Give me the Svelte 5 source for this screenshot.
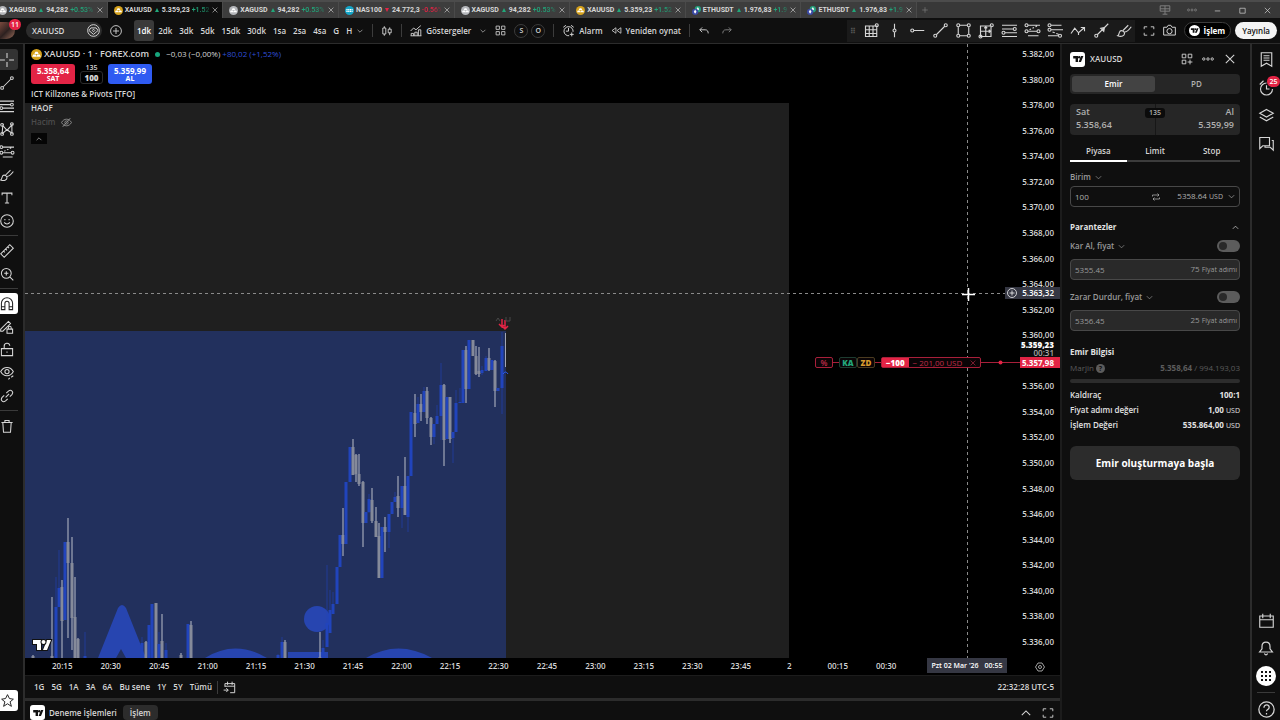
<script lang="ts">
  type Tab = { symbol: string; price: string; change: string; coin: string; down?: boolean; active?: boolean };
  // x, high, low, body top, body bottom, rising
  type Candle = [number, number, number, number, number, boolean];

  const tabs: Tab[] = [
    { symbol: "XAGUSD", price: "94,282", change: "+0.53% /", coin: "silver" },
    { symbol: "XAUUSD", price: "5.359,23", change: "+1.52%", coin: "gold", active: true },
    { symbol: "XAGUSD", price: "94,282", change: "+0.53% /", coin: "silver" },
    { symbol: "NAS100", price: "24.772,3", change: "-0.56%", coin: "nas", down: true },
    { symbol: "XAGUSD", price: "94,282", change: "+0.53% /", coin: "silver" },
    { symbol: "XAUUSD", price: "5.359,23", change: "+1.52%", coin: "gold" },
    { symbol: "ETHUSDT", price: "1.976,83", change: "+1.91%", coin: "eth" },
    { symbol: "ETHUSDT", price: "1.976,83", change: "+1.91%", coin: "eth" },
  ];

  const intervals = ["1dk", "2dk", "3dk", "5dk", "15dk", "30dk", "1sa", "2sa", "4sa", "G", "H"];
  const favorites = ["grid", "vline", "hray", "trend", "rect", "position", "fib", "fibext", "fibtime", "zigzag", "arrow", "brush"];
  const drawTools = ["cross", "trend", "fib", "pattern", "fibext", "brush", "text", "smile", "-", "ruler", "zoom", "-", "magnet", "pencil", "lock", "eye", "link", "-", "trash"];
  // the last slot sits under the cursor label
  const times = ["20:15", "20:30", "20:45", "21:00", "21:15", "21:30", "21:45", "22:00", "22:15", "22:30", "22:45", "23:00", "23:15", "23:30", "23:45", "2", "00:15", "00:30", ""];
  const ranges = ["1G", "5G", "1A", "3A", "6A", "Bu sene", "1Y", "5Y", "Tümü"];
  const prices = Array.from({ length: 24 }, (_, i) => `5.${382 - i * 2},00`);
  const orderTypes = ["Piyasa", "Limit", "Stop"];
  const orderInfo = [
    { label: "Kaldıraç", value: "100:1", unit: "" },
    { label: "Fiyat adımı değeri", value: "1,00", unit: "USD" },
    { label: "İşlem Değeri", value: "535.864,00", unit: "USD" },
  ];

  let interval = $state("1dk");
  let orderType = $state("Piyasa");
  let takeProfit = $state(false);
  let stopLoss = $state(false);

  const candles: Candle[] = [
    [33, 655, 658, 656, 658, false],
    [52, 597, 658, 656, 658, false],
    [56, 577, 658, 607, 658, true],
    [59, 550, 607, 588, 607, true],
    [62, 580, 658, 587, 621, false],
    [65, 542, 620, 542, 620, true],
    [68, 518, 638, 542, 563, false],
    [72, 537, 650, 563, 618, false],
    [75, 577, 658, 617, 658, false],
    [78, 638, 658, 639, 658, false],
    [85, 632, 658, 656, 658, true],
    [142, 637, 658, 643, 658, true],
    [146, 641, 658, 642, 658, false],
    [149, 625, 658, 625, 658, true],
    [152, 604, 658, 604, 658, true],
    [156, 603, 658, 603, 658, false],
    [159, 632, 658, 644, 658, true],
    [162, 614, 658, 641, 658, false],
    [166, 643, 658, 650, 658, true],
    [181, 653, 658, 655, 658, false],
    [188, 624, 658, 624, 658, true],
    [191, 621, 658, 625, 658, false],
    [278, 654, 658, 655, 658, true],
    [282, 637, 658, 642, 658, true],
    [285, 640, 658, 642, 658, false],
    [320, 632, 658, 657, 658, false],
    [323, 640, 658, 648, 658, true],
    [327, 565, 647, 623, 647, true],
    [330, 590, 633, 610, 633, true],
    [333, 592, 614, 604, 614, true],
    [337, 567, 604, 567, 604, true],
    [340, 535, 567, 535, 567, true],
    [343, 508, 556, 535, 544, false],
    [346, 482, 544, 482, 544, true],
    [350, 447, 482, 447, 482, true],
    [353, 439, 475, 447, 475, false],
    [356, 454, 482, 455, 474, false],
    [359, 454, 486, 474, 484, false],
    [363, 481, 547, 482, 523, false],
    [366, 512, 523, 512, 523, true],
    [369, 494, 513, 499, 512, true],
    [372, 488, 523, 500, 521, false],
    [376, 507, 537, 521, 537, false],
    [379, 523, 578, 536, 578, false],
    [382, 527, 578, 527, 578, true],
    [385, 517, 552, 527, 532, false],
    [389, 514, 548, 514, 532, true],
    [392, 502, 514, 502, 514, true],
    [395, 492, 502, 497, 502, true],
    [398, 476, 517, 496, 508, false],
    [402, 486, 528, 486, 508, true],
    [405, 457, 515, 486, 515, false],
    [408, 476, 532, 476, 517, true],
    [411, 412, 476, 412, 476, true],
    [415, 394, 437, 413, 424, false],
    [418, 397, 423, 404, 423, true],
    [421, 394, 421, 404, 412, false],
    [424, 387, 412, 391, 412, true],
    [427, 387, 424, 391, 418, false],
    [431, 417, 445, 418, 437, false],
    [434, 424, 444, 424, 437, true],
    [437, 405, 424, 416, 424, true],
    [441, 363, 440, 385, 416, true],
    [444, 384, 466, 385, 440, false],
    [447, 397, 439, 397, 439, true],
    [450, 397, 443, 397, 439, false],
    [453, 432, 463, 432, 438, true],
    [456, 390, 432, 403, 432, true],
    [460, 388, 403, 402, 403, true],
    [463, 350, 403, 350, 403, true],
    [466, 346, 403, 350, 389, false],
    [469, 340, 389, 340, 389, true],
    [473, 340, 356, 340, 356, false],
    [476, 346, 375, 356, 374, false],
    [479, 347, 377, 371, 374, false],
    [482, 366, 375, 370, 373, true],
    [486, 356, 371, 358, 371, true],
    [489, 348, 371, 358, 370, false],
    [492, 360, 370, 360, 370, true],
    [495, 360, 407, 361, 391, false],
    [498, 388, 391, 388, 391, true],
    [502, 332, 414, 346, 388, true],
  ];

  // stroke paths on a 20 x 20 grid
  const icons: Record<string, string> = {
    close: "M4 4l12 12M16 4L4 16",
    plus: "M10 3v14M3 10h14",
    down: "M4 7l6 6 6-6",
    up: "M4 13l6-6 6 6",
    dots: "M5 10a2 2 0 1 1-4 0 2 2 0 0 1 4 0zM12 10a2 2 0 1 1-4 0 2 2 0 0 1 4 0zM19 10a2 2 0 1 1-4 0 2 2 0 0 1 4 0z",
    min: "M4 11h12",
    max: "M4 5h12v11H4z",
    monitor: "M2 3h16v9H2zM10 3v9M2 8h16M10 12v5M6 17h8",
    gem: "M19 10a9 9 0 1 1-18 0 9 9 0 0 1 18 0zM6 6h8l3 4-7 6-7-6zM10 8l2 2-2 2-2-2z",
    addcircle: "M19 10a9 9 0 1 1-18 0 9 9 0 0 1 18 0zM10 5v10M5 10h10",
    candles: "M3 5h5v10H3zM5.500 2v3M5.500 15v3M12 7h5v6h-5zM14.500 4v3M14.500 13v4",
    indicators: "M1 10l5-5 4 3 8-7M2 18v-4h4v4M8 18v-6h4v6M14 18V8h4v10M1 18h18",
    layouts: "M2 2h6v6H2zM12 2h6v6h-6zM2 12h6v6H2zM12 12h6v6h-6z",
    addlayout: "M2 2h6v6H2zM12 2h6v6h-6zM2 12h6v6H2zM15 11v8M11 15h8",
    alarm: "M11 18a7 7 0 1 1 6-6M10 6v5H6M2 5l4-3M14 2l4 3M15 13v6M12 16h6",
    replay: "M9 5v10l-7-5zM18 5v10l-7-5z",
    undo: "M7 4L3 8l4 4M3 8h9c4 0 5 3 5 6",
    redo: "M13 4l4 4-4 4M17 8H8c-4 0-5 3-5 6",
    grid: "M2 4h15v14H2zM7 4v14M12 4v14M2 9h15M2 14h15M19 3a2 2 0 1 1-4 0 2 2 0 0 1 4 0z",
    vline: "M10 1v7M10 12v7M12 10a2 2 0 1 1-4 0 2 2 0 0 1 4 0z",
    hray: "M5 10h14M5 10a2 2 0 1 1-4 0 2 2 0 0 1 4 0z",
    trend: "M5 15L15 5M5 17a2 2 0 1 1-4 0 2 2 0 0 1 4 0zM19 3a2 2 0 1 1-4 0 2 2 0 0 1 4 0z",
    rect: "M5 3h10M5 17h10M3 5v10M17 5v10M5 3a2 2 0 1 1-4 0 2 2 0 0 1 4 0zM19 3a2 2 0 1 1-4 0 2 2 0 0 1 4 0zM5 17a2 2 0 1 1-4 0 2 2 0 0 1 4 0zM19 17a2 2 0 1 1-4 0 2 2 0 0 1 4 0z",
    position: "M2 4h14v14H2zM2 11h14M9 4v14M19 3a2 2 0 1 1-4 0 2 2 0 0 1 4 0zM4 18a2 2 0 1 1-4 0 2 2 0 0 1 4 0zM7 7l2-2 2 2M13 9l2 2-2 2",
    fib: "M0 3h20M0 8h15M4 13h16M0 18h20M19 8a2 2 0 1 1-4 0 2 2 0 0 1 4 0zM4 13a2 2 0 1 1-4 0 2 2 0 0 1 4 0z",
    fibext: "M4 3h16M4 11h12M4 17h14M6 9l2-1M10 7l2-1M14 5l2-1M4 3a2 2 0 1 1-4 0 2 2 0 0 1 4 0zM4 11a2 2 0 1 1-4 0 2 2 0 0 1 4 0zM20 11a2 2 0 1 1-4 0 2 2 0 0 1 4 0z",
    fibtime: "M4 3h14M4 9h16M0 17h14M6 12l3 1M11 14l3 1M4 3a2 2 0 1 1-4 0 2 2 0 0 1 4 0zM4 9a2 2 0 1 1-4 0 2 2 0 0 1 4 0zM18 17a2 2 0 1 1-4 0 2 2 0 0 1 4 0z",
    zigzag: "M0 14l5-7 5 6 8-7M13 6h5v5M10 13v3",
    arrow: "M4 16L19 1M9 7l5-1-1 5zM10 8l3 1M5 17a2 2 0 1 1-4 0 2 2 0 0 1 4 0z",
    brush: "M1 17c2-1 1-3 3-6 2-2 6 0 6 3 0 3-4 5-9 3zM8 10l7-7M10 12c4 0 6-3 9-7",
    full: "M2 7V3h5M13 3h5v4M18 13v4h-5M7 17H2v-4",
    camera: "M1 5h5l2-3h4l2 3h5v12H1zM14 11a4 4 0 1 1-8 0 4 4 0 0 1 8 0z",
    cross: "M10 0v7M10 13v7M0 10h7M13 10h7",
    pattern: "M3 17L4 5l6 7 7-8v12l-7-5-7 6M5 4a2 2 0 1 1-4 0 2 2 0 0 1 4 0zM19 3a2 2 0 1 1-4 0 2 2 0 0 1 4 0zM5 17a2 2 0 1 1-4 0 2 2 0 0 1 4 0zM19 17a2 2 0 1 1-4 0 2 2 0 0 1 4 0z",
    text: "M3 6V3h14v3M10 3v14M7 17h6",
    smile: "M19 10a9 9 0 1 1-18 0 9 9 0 0 1 18 0zM7 7v2M13 7v2M6 12c2 3 6 3 8 0",
    ruler: "M1 14L14 1l5 5L6 19zM5 10l2 2M8 7l2 2M11 4l2 2",
    zoom: "M16 9a7 7 0 1 1-14 0 7 7 0 0 1 14 0zM14 14l5 5M9 6v6M6 9h6",
    magnet: "M2 18V9a8 8 0 0 1 16 0v9h-5V9a3 3 0 0 0-6 0v9zM2 14h5M13 14h5",
    pencil: "M1 13L12 2l3 3L4 16H1zM10 13h8v6h-8zM12 13v-2a2 2 0 0 1 4 0v2",
    lock: "M2 8h16v10H2zM6 8V5a4 4 0 0 1 8-1M10 12v2",
    eye: "M1 8c4-8 14-8 18 0-4 8-14 8-18 0zM13 8a3 3 0 1 1-6 0 3 3 0 0 1 6 0zM12 19l2-2M16 16l3-2",
    link: "M8 12L13 7M9 6l3-3c4-3 8 1 5 5l-3 3M11 14l-3 3c-4 3-8-1-5-5l3-3",
    trash: "M2 5h16M4 5l1 14h10l1-14M7 5V2h6v3",
    star: "M10 1l3 6 6 1-5 4 2 7-6-4-6 4 2-7-5-4 6-1z",
    hidden: "M1 10c4-8 14-8 18 0-4 8-14 8-18 0zM13 10a3 3 0 1 1-6 0 3 3 0 0 1 6 0zM3 18L17 2",
    hexnut: "M6 2h8l5 8-5 8H6l-5-8zM13 10a3 3 0 1 1-6 0 3 3 0 0 1 6 0z",
    calgo: "M3 9V4h15v14h-7M7 1v5M14 1v5M3 8h15M1 14h7M5 11l3 3-3 3",
    swap: "M3 9V6h13M13 3l3 3-3 3M17 11v3H4M7 11l-3 3 3 3",
    list: "M3 1h14v18l-7-4-7 4zM6 5h8M6 8h8M6 11h8",
    clock: "M18 12a8 8 0 1 1-8-8M10 7v5h4M1 6l5-5",
    layers: "M10 2l9 5-9 5-9-5zM1 12l9 5 9-5",
    chat: "M1 2h13v11H5l-4 4zM17 6h2v13l-4-4H8v-2",
    calendar: "M1 4h18v15H1zM1 9h18M5 1v6M15 1v6",
    bell: "M2 15h16l-3-4V8c0-7-10-7-10 0v3zM8 17c1 2 3 2 4 0",
    help: "M19 10a9 9 0 1 1-18 0 9 9 0 0 1 18 0zM7 8c0-5 7-4 6 0 0 2-3 2-3 4M10 14v2",
  };
</script>

{#snippet icon(name: string, size: number)}
  <svg class="icon" width={size} height={size} viewBox="0 0 20 20" aria-hidden="true">
    <path d={icons[name]} />
  </svg>
{/snippet}

{#snippet logo(size: number)}
  <svg class="logo" width={size} height={size} viewBox="0 0 20 20" aria-hidden="true">
    <path d="M2 5h8v10H6V9H2zM15 5h4l-4 10h-4z" />
    <circle cx="12" cy="7" r="2" />
  </svg>
{/snippet}

{#snippet coin(kind: string, size: number)}
  <svg class="coin" width={size} height={size} viewBox="0 0 20 20" aria-hidden="true">
    {#if kind === "eth"}
      <circle cx="13" cy="7" r="7" fill="#25a17c" />
      <path d="M13 2l3 5-3 3-3-3z" fill="#fff" />
      <circle cx="7" cy="13" r="7" fill="#3b4aa5" />
      <path d="M7 8l3 5-3 4-3-4z" fill="#fff" />
    {:else if kind === "nas"}
      <circle cx="10" cy="10" r="10" fill="#13a5c8" />
      <path d="M3 8h14M3 12h14" stroke="#fff" stroke-width="3" stroke-dasharray="3 1" />
    {:else}
      <circle cx="10" cy="10" r="10" fill={kind === "gold" ? "#d6a21c" : "#b4b6ba"} />
      <path d="M8 5h4l2 4H6zM4 10h5l1 4H2zM11 10h5l2 4h-8z" fill="#fff" />
    {/if}
  </svg>
{/snippet}

<div class="app">
  <header class="tabbar">
    <nav class="tabs">
      {#each tabs as tab}
        <div class="tab" class:active={tab.active}>
          {@render coin(tab.coin, 9)}
          <a href="#chart">{tab.symbol}</a>
          <span class="mark" class:down={tab.down}></span>
          <span>{tab.price}</span>
          <span class="change" class:down={tab.down}>{tab.change}</span>
          <button aria-label="Kapat">{@render icon("close", 8)}</button>
        </div>
      {/each}
    </nav>
    <button class="dim" aria-label="Yeni sekme">{@render icon("plus", 8)}</button>
    <div class="window">
      <button class="dim" aria-label="Ekranlar">{@render icon("monitor", 12)}</button>
      <button class="dim" aria-label="Menü">{@render icon("dots", 10)}</button>
      <button aria-label="Küçült">{@render icon("min", 9)}</button>
      <button aria-label="Büyüt">{@render icon("max", 9)}</button>
      <button aria-label="Pencereyi kapat">{@render icon("close", 9)}</button>
    </div>
  </header>

  <div class="toolbar">
    <button class="avatar" aria-label="Profil"><span class="badge">11</span></button>
    <button class="search"><span>XAUUSD</span>{@render icon("gem", 13)}</button>
    <button class="add" aria-label="Sembol ekle">{@render icon("addcircle", 12)}</button>
    <div class="intervals">
      {#each intervals as item}
        <button class:on={interval === item} onclick={() => (interval = item)}>{item}</button>
      {/each}
      <button class="more" aria-label="Diğer">{@render icon("down", 8)}</button>
    </div>
    <span class="bar"></span>
    <button aria-label="Mum">{@render icon("candles", 12)}</button>
    <span class="bar"></span>
    <button>{@render icon("indicators", 12)}Göstergeler</button>
    <button aria-label="Şablonlar">{@render icon("down", 8)}</button>
    <button aria-label="Düzen">{@render icon("layouts", 11)}</button>
    <div class="rounds">
      <button class="round">S</button>
      <button class="round">O</button>
    </div>
    <span class="bar"></span>
    <button>{@render icon("alarm", 13)}Alarm</button>
    <button class="replay">{@render icon("replay", 11)}Yeniden oynat</button>
    <span class="bar"></span>
    <button class="undo" aria-label="Geri al">{@render icon("undo", 12)}</button>
    <button class="dim" aria-label="Yinele">{@render icon("redo", 12)}</button>
    <div class="favorites">
      <span class="grip">⠿</span>
      {#each favorites as tool}
        <button aria-label={tool}>{@render icon(tool, 15)}</button>
      {/each}
    </div>
    <button aria-label="Tam ekran">{@render icon("full", 12)}</button>
    <button class="shot" aria-label="Görüntü al">{@render icon("camera", 13)}</button>
    <button class="trade"><i>{@render logo(9)}</i>İşlem</button>
    <button class="publish">Yayınla</button>
  </div>

  <div class="workspace">
    <aside class="drawbar">
      {#each drawTools as tool}
        {#if tool === "-"}
          <hr />
        {:else}
          <button class={tool} aria-label={tool}>{@render icon(tool, 14)}</button>
        {/if}
      {/each}
      <button class="star" aria-label="Favoriler">{@render icon("star", 13)}</button>
    </aside>

    <main>
      <section class="chart" id="chart">
        <svg class="plot" aria-hidden="true">
          <g transform="translate(-25 -44)">
            <rect x="25" y="103" width="764" height="555" fill="#1f1f1f" />
            <rect x="25" y="331" width="481" height="327" fill="#22305d" />
            <path class="mark-text" d="M98 658l20-50q4-6 8 0l20 50h-20l-5-9-5 9zM205 658q30-19 62 0zM288 652h40v6h-40zM366 658q32-19 66 0z" />
            <circle class="mark-text" cx="317" cy="619" r="13" />
            {#each candles as [x, high, low, top, bottom, rising]}
              <g class:rising class="candle">
                <rect class="wick" x={x - 0.5} y={high} width="1" height={low - high} />
                <rect x={x - 1.5} y={top} width="3" height={bottom - top} />
              </g>
            {/each}
            <path d="M505.500 333v34" stroke="#a3a7b4" />
            <path d="M503 374q2.500-4 5 0" stroke="#2c5cf0" fill="none" />
            <path d="M502 319v8M505 320v9M499 324l3 3 2-2M502 326l3 3 3-3" stroke="#e32445" stroke-width="1.500" fill="none" />
            <path d="M496 321l2-3 2 3M506 317v4h4v-4" stroke="#484848" fill="none" />
            <path class="cross-line" d="M25 293.500H1007M967.500 44V658" />
            <path d="M962 294.500h13M968.500 288v13" stroke="#fff" stroke-width="1.500" />
            <path d="M815 362.500H1020" stroke="#a81f3a" />
            <circle cx="1000.500" cy="362.500" r="2" fill="#e32445" />
            <g class="brand" transform="translate(32 635)">
              <path d="M1 5h8v10H5V9H1zM15 5h4l-4 10h-4z" />
              <circle cx="11.500" cy="7" r="2" />
            </g>
          </g>
        </svg>

        <div class="legend">
          <div class="legend-title">
            {@render coin("gold", 11)}
            <h1>XAUUSD · 1 · FOREX.com</h1>
            <span class="live"></span>
            <span class="delta">−0,03 (−0,00%)</span>
            <span class="gain">+80,02 (+1,52%)</span>
          </div>
          <div class="quotes">
            <button class="sell">5.358,64<small>SAT</small></button>
            <div class="lots"><span>135</span><b>100</b></div>
            <button class="buy">5.359,99<small>AL</small></button>
          </div>
          <div class="study">ICT Killzones &amp; Pivots [TFO]</div>
          <div class="study">HAOF</div>
          <div class="study muted">Hacim {@render icon("hidden", 11)}</div>
          <button class="fold" aria-label="Daralt">{@render icon("up", 8)}</button>
        </div>

        <div class="order">
          <span class="chip red">%</span>
          <span class="pair"><b class="chip green">KA</b><b class="chip amber">ZD</b></span>
          <span class="lot"><b>−100</b><span>− 201,00 USD</span><button aria-label="İptal">{@render icon("close", 8)}</button></span>
        </div>

        <div class="prices">
          {#each prices as price}<span>{price}</span>{/each}
          <div class="cursor-price"><i>{@render icon("addcircle", 10)}</i>5.363,32</div>
          <div class="last-price"><b>5.359,23</b><span>00:31</span></div>
          <div class="entry-price">5.357,98</div>
        </div>
      </section>

      <div class="time-axis">
        <div class="times">
          {#each times as time}<span>{time}</span>{/each}
        </div>
        <div class="cursor-time"><span>Pzt 02 Mar '26</span><span>00:55</span></div>
        <button aria-label="Ayarlar">{@render icon("hexnut", 10)}</button>
      </div>

      <div class="ranges">
        {#each ranges as range}<button>{range}</button>{/each}
        <span class="bar"></span>
        <button aria-label="Tarihe git">{@render icon("calgo", 13)}</button>
        <button class="clock">22:32:28 UTC-5</button>
      </div>

      <div class="dock">
        <span class="tile">{@render logo(12)}</span>
        <button>Deneme İşlemleri</button>
        <button class="on">İşlem</button>
        <div class="dock-end">
          <button aria-label="Aç">{@render icon("up", 14)}</button>
          <button aria-label="Büyüt">{@render icon("full", 12)}</button>
        </div>
      </div>
    </main>

    <form class="ticket">
      <header>
        <span class="tile">{@render logo(12)}</span>
        <h2>XAUUSD</h2>
        <button type="button" aria-label="Düzen ekle">{@render icon("addlayout", 12)}</button>
        <button type="button" aria-label="Diğer">{@render icon("dots", 12)}</button>
        <button type="button" aria-label="Kapat">{@render icon("close", 14)}</button>
      </header>

      <div class="segment">
        <button type="button" class="on">Emir</button>
        <button type="button">PD</button>
      </div>

      <div class="sides">
        <button type="button"><span>Sat</span><span>5.358,64</span></button>
        <button type="button"><span>Al</span><span>5.359,99</span></button>
        <span class="spread">135</span>
      </div>

      <div class="types">
        {#each orderTypes as type}
          <button type="button" class:on={orderType === type} onclick={() => (orderType = type)}>{type}</button>
        {/each}
      </div>

      <label class="caption" for="units">Birim {@render icon("down", 9)}</label>
      <div class="field">
        <input id="units" value="100" />
        {@render icon("swap", 10)}
        <span class="amount">5358.64 <small>USD</small></span>
        {@render icon("down", 9)}
      </div>

      <h3 class="brackets">Parantezler {@render icon("up", 9)}</h3>

      <div class="toggle-row">
        <label class="caption" for="tp">Kar Al, fiyat {@render icon("down", 9)}</label>
        <input id="tp" type="checkbox" bind:checked={takeProfit} />
      </div>
      <div class="field filled">
        <input aria-label="Kar Al" value="5355.45" />
        <span class="amount">75 <small>Fiyat adımı</small></span>
      </div>

      <div class="toggle-row second">
        <label class="caption" for="sl">Zarar Durdur, fiyat {@render icon("down", 9)}</label>
        <input id="sl" type="checkbox" bind:checked={stopLoss} />
      </div>
      <div class="field filled">
        <input aria-label="Zarar Durdur" value="5356.45" />
        <span class="amount">25 <small>Fiyat adımı</small></span>
      </div>

      <h3 class="info">Emir Bilgisi</h3>
      <div class="margin-row"><span>Marjin <i>?</i></span><span><b>5.358,64</b> / 994.193,03</span></div>
      <div class="meter"></div>
      <dl>
        {#each orderInfo as row}
          <div><dt>{row.label}</dt><dd>{row.value} <small>{row.unit}</small></dd></div>
        {/each}
      </dl>
      <button type="button" class="submit">Emir oluşturmaya başla</button>
    </form>

    <aside class="rail">
      <button aria-label="İzleme listesi">{@render icon("list", 15)}</button>
      <button aria-label="Alarmlar">{@render icon("clock", 15)}<span class="badge">25</span></button>
      <button aria-label="Katmanlar">{@render icon("layers", 15)}</button>
      <button aria-label="Sohbet">{@render icon("chat", 15)}</button>
      <button class="push" aria-label="Takvim">{@render icon("calendar", 15)}</button>
      <button aria-label="Bildirimler">{@render icon("bell", 16)}</button>
      <button aria-label="Ürünler">
        <svg width="20" height="20" viewBox="0 0 20 20" aria-hidden="true">
          <circle cx="10" cy="10" r="10" fill="#fff" />
          <path d="M5 6h10M5 10h10M5 14h10" stroke="#111" stroke-width="2" stroke-dasharray="2 2" />
        </svg>
      </button>
      <hr />
      <button class="last" aria-label="Yardım">{@render icon("help", 17)}</button>
    </aside>
  </div>
</div>

<style>
  :global(body) {
    background: #0f0f0f;
  }

  .app {
    --line: #2c2c2c;
    --red: #e32445;
    --green: #22a67a;
    display: flex;
    flex-direction: column;
    height: 100vh;
    overflow: hidden;
    background: #0f0f0f;
    color: #d6d6d6;
    font: 600 8px/14px "Open Sans", "Noto Sans", sans-serif;
    white-space: nowrap;
  }

  .app *,
  .app *::before {
    box-sizing: border-box;
  }

  button {
    display: flex;
    align-items: center;
    justify-content: center;
    gap: 4px;
    flex: none;
    padding: 0;
    border: 0;
    background: none;
    color: inherit;
    font: inherit;
    cursor: pointer;
  }

  h1,
  h2,
  h3,
  dl,
  dd {
    margin: 0;
    font-size: 8px;
  }

  small {
    font-size: 7px;
  }

  i {
    font-style: normal;
  }

  .icon {
    display: block;
    flex: none;
    fill: none;
    stroke: currentColor;
    stroke-width: 1.5;
    overflow: visible;
  }

  .logo,
  .coin {
    display: block;
    flex: none;
  }

  .logo {
    fill: #111;
  }

  .dim {
    color: #858585;
  }

  .tabbar {
    display: flex;
    align-items: center;
    flex: none;
    height: 18px;
    overflow: hidden;
    border-top: 2px solid #4c4c4c;
    background: #383838;
    font-family: Roboto, "Open Sans", sans-serif;
    font-size: 7px;
    font-weight: 700;
  }

  .tabs {
    display: flex;
    width: 925px;
    height: 100%;
    margin-left: -8px;
    margin-right: 4px;
  }

  .tab {
    display: flex;
    align-items: center;
    flex: 1;
    gap: 2px;
    min-width: 0;
    padding: 0 3px 0 6px;
    border-right: 1px solid #4a4a4a;
    background: #3d3d3d;
  }

  .tab.active {
    background: #0f0f0f;
  }

  .tab a {
    color: inherit;
    text-decoration: none;
  }

  .tab button {
    margin-left: auto;
  }

  .mark {
    flex: none;
    margin: 0 1px;
    border: 2px solid transparent;
    border-top: 0;
    border-bottom: 4px solid var(--green);
  }

  .mark.down {
    border-top: 4px solid var(--red);
    border-bottom: 0;
  }

  .change {
    overflow: hidden;
    min-width: 0;
    color: var(--green);
    font-weight: 500;
    mask-image: linear-gradient(to right, #000 60%, #0004);
  }

  .change.down {
    color: var(--red);
  }

  .window {
    display: flex;
    gap: 16px;
    margin-left: auto;
    padding-right: 8px;
  }

  .toolbar {
    display: flex;
    align-items: center;
    flex: none;
    gap: 8px;
    height: 26px;
    padding-right: 3px;
    border-bottom: 1px solid var(--line);
  }

  .avatar {
    position: relative;
    width: 15px;
    height: 17px;
    border-radius: 0 9px 9px 0;
    background: linear-gradient(135deg, #7b4a3e, #2d2120 50%, #9a6c5a);
  }

  .badge {
    position: absolute;
    top: -3px;
    right: -6px;
    padding: 0 2px;
    border-radius: 6px;
    background: var(--red);
    color: #fff;
    font-size: 7px;
    line-height: 11px;
  }

  .search {
    justify-content: space-between;
    width: 76px;
    height: 17px;
    margin-left: 3px;
    padding: 0 2px 0 6px;
    border-radius: 9px;
    background: #2c2c2c;
  }

  .intervals {
    display: flex;
    gap: 1px;
    margin-left: 4px;
  }

  .intervals button {
    height: 21px;
    padding: 0 3px;
    border-radius: 3px;
  }

  .intervals .on {
    background: #3a3a3a;
    color: #fff;
  }

  .intervals .more {
    padding: 0;
  }

  .bar {
    width: 1px;
    height: 13px;
    background: #3c3c3c;
  }

  .rounds {
    display: flex;
    gap: 3px;
  }

  .round {
    width: 14px;
    height: 14px;
    border: 1px solid #3c3c3c;
    border-radius: 50%;
    font-size: 7px;
  }

  .undo {
    margin-right: 3px;
  }

  .favorites {
    display: flex;
    align-items: center;
    gap: 8px;
    height: 22px;
    margin-left: auto;
    padding: 0 3px;
    background: #1a1a1a;
  }

  .grip {
    color: #555;
  }

  .trade {
    height: 17px;
    padding: 0 5px 0 4px;
    border: 1px solid #3c3c3c;
    border-radius: 9px;
    background: #000;
    color: #fff;
    font-weight: 700;
  }

  .trade i {
    padding: 1px;
    border-radius: 50%;
    background: #fff;
  }

  .publish {
    height: 17px;
    margin-left: -4px;
    padding: 0 7px;
    border-radius: 9px;
    background: #f4f4f4;
    color: #111;
  }

  .workspace {
    display: grid;
    grid-template-columns: 25px minmax(0, 1fr) 192px 28px;
    flex: 1;
    min-height: 0;
  }

  .drawbar {
    display: flex;
    flex-direction: column;
    gap: 2px;
    padding: 5px 7px 9px 0;
    border-right: 2px solid var(--line);
  }

  .drawbar button {
    width: 18px;
    height: 21px;
    padding-right: 4px;
    border-radius: 0 3px 3px 0;
  }

  .drawbar .cross {
    background: #333;
  }

  .drawbar .magnet,
  .drawbar .star {
    background: #fff;
    color: #222;
  }

  .drawbar .star {
    margin-top: auto;
  }

  hr {
    width: 18px;
    height: 1px;
    margin: 2px 0;
    border: 0;
    background: #3a3a3a;
  }

  main {
    display: flex;
    flex-direction: column;
    min-width: 0;
    min-height: 0;
  }

  .chart {
    position: relative;
    display: flex;
    justify-content: space-between;
    flex: 1;
    min-height: 0;
    overflow: hidden;
    background: #000;
  }

  .plot {
    position: absolute;
    inset: 0;
    width: 100%;
    height: 100%;
  }

  .mark-text {
    fill: #2745b0;
  }

  .candle {
    fill: #858a9a;
  }

  .candle .wick {
    fill: #b9bdca;
  }

  .candle.rising,
  .candle.rising .wick {
    fill: #2144bc;
  }

  .candle.rising .wick {
    opacity: 0.6;
  }

  .cross-line {
    stroke: #8a8a8a;
    stroke-dasharray: 3 3;
  }

  .brand {
    fill: #fff;
    stroke: #111;
    stroke-width: 2;
    paint-order: stroke;
  }

  .legend {
    position: relative;
    padding: 3px 6px;
  }

  .legend-title {
    display: flex;
    align-items: center;
    gap: 2px;
  }

  .live {
    width: 5px;
    height: 5px;
    margin: 0 4px;
    border-radius: 50%;
    background: #17a57d;
  }

  .legend h1 {
    font-size: 9px;
    font-weight: 600;
  }

  .delta,
  .gain {
    font-weight: 400;
  }

  .gain {
    color: #2f4fd6;
  }

  .quotes {
    display: flex;
    gap: 5px;
    margin: 3px 0;
  }

  .quotes button {
    flex-direction: column;
    gap: 0;
    width: 44px;
    height: 20px;
    border-radius: 3px;
    color: #fff;
    font-weight: 700;
    line-height: 9px;
  }

  .quotes small {
    line-height: 7px;
  }

  .sell {
    background: var(--red);
  }

  .buy {
    background: #2f5bf2;
  }

  .lots {
    display: flex;
    flex-direction: column;
    align-items: center;
    width: 23px;
    font-size: 7px;
    line-height: 7px;
  }

  .lots b {
    width: 100%;
    border: 1px solid #2c2c2c;
    border-radius: 3px;
    font-size: 8px;
    line-height: 11px;
    text-align: center;
  }

  .study {
    display: flex;
    align-items: center;
    gap: 5px;
  }

  .muted {
    color: #4c4c4c;
  }

  .muted .icon {
    color: #999;
  }

  .fold {
    width: 16px;
    height: 11px;
    margin-top: 4px;
    background: #050505;
  }

  .order {
    position: absolute;
    top: 313px;
    left: 790px;
    display: flex;
    gap: 6px;
    line-height: 9px;
  }

  .chip,
  .lot {
    border: 1px solid #a81f3a;
    border-radius: 2px;
    background: #0a0406;
    color: #c02c48;
  }

  .chip {
    width: 18px;
    text-align: center;
  }

  .pair {
    display: flex;
  }

  .green {
    border-color: #1d3c30;
    color: var(--green);
  }

  .amber {
    border-color: #4b3b20;
    color: #d99a2e;
  }

  .lot {
    display: flex;
  }

  .lot b {
    padding: 0 4px;
    background: var(--red);
    color: #fff;
  }

  .lot span {
    padding: 0 4px;
    font-weight: 400;
  }

  .lot button {
    width: 14px;
  }

  .prices {
    position: relative;
    display: flex;
    flex-direction: column;
    justify-content: space-between;
    width: 53px;
    padding: 3px 6px 9px;
    text-align: right;
  }

  .cursor-price,
  .last-price,
  .entry-price {
    position: absolute;
    right: 0;
    padding-right: 6px;
    color: #fff;
    line-height: 12px;
  }

  .cursor-price {
    top: 243px;
    display: flex;
    align-items: center;
    gap: 5px;
    padding-left: 2px;
    background: #353743;
  }

  .last-price {
    top: 296px;
    display: flex;
    flex-direction: column;
    width: 40px;
    background: #0c0c0c;
    line-height: 9px;
  }

  .last-price span {
    color: #aaa;
    line-height: 8px;
  }

  .entry-price {
    top: 313px;
    width: 40px;
    background: var(--red);
    font-weight: 700;
    line-height: 11px;
  }

  .time-axis {
    position: relative;
    display: flex;
    flex: none;
    height: 17px;
    padding: 0 15px 0 13px;
    background: #000;
  }

  .times {
    display: flex;
    flex: 1;
    margin-right: 76px;
  }

  .times span {
    flex: 1;
    line-height: 16px;
    text-align: center;
  }

  .cursor-time {
    position: absolute;
    top: 0;
    left: 902px;
    display: flex;
    justify-content: center;
    gap: 6px;
    width: 80px;
    height: 15px;
    background: #353743;
    color: #fff;
    font-size: 7px;
    line-height: 16px;
  }

  .ranges {
    display: flex;
    align-items: center;
    flex: none;
    gap: 7px;
    height: 23px;
    padding: 0 6px 0 9px;
    border-top: 1px solid #1c1c1c;
  }

  .ranges .bar {
    margin: 0 -2px;
  }

  .clock {
    margin-left: auto;
  }

  .dock {
    display: flex;
    align-items: center;
    flex: none;
    gap: 4px;
    height: 22px;
    padding: 4px 6px 0 5px;
    border-top: 3px solid var(--line);
  }

  .dock .on {
    height: 15px;
    margin-left: 2px;
    padding: 0 7px;
    border-radius: 4px;
    background: #2c2c2c;
  }

  .dock-end {
    display: flex;
    gap: 9px;
    margin-left: auto;
  }

  .tile {
    display: grid;
    place-items: center;
    width: 15px;
    height: 15px;
    border-radius: 3px;
    background: #fff;
  }

  .ticket {
    padding: 0 10px 0 8px;
    border-left: 2px solid #1c1c1c;
    border-right: 2px solid var(--line);
    color: #b0b0b0;
  }

  .ticket header {
    display: flex;
    align-items: center;
    gap: 9px;
    height: 30px;
    padding-right: 3px;
    color: #d6d6d6;
  }

  .ticket h2 {
    flex: 1;
    margin-left: -4px;
    font-weight: 600;
  }

  .segment,
  .sides,
  .types {
    display: flex;
  }

  .segment {
    height: 20px;
    padding: 2px;
    border-radius: 4px;
    background: #262626;
  }

  .segment button,
  .sides button,
  .types button {
    flex: 1;
  }

  .segment button {
    border-radius: 3px;
  }

  .segment .on {
    background: #434343;
    color: #fff;
  }

  .sides {
    position: relative;
    height: 31px;
    margin: 10px 0 7px;
    border-radius: 4px;
    background: #262626;
  }

  .sides button {
    flex-direction: column;
    align-items: flex-start;
    gap: 0;
    padding: 0 6px 3px;
    font-size: 9px;
    line-height: 13px;
  }

  .sides button + button {
    align-items: flex-end;
    border-left: 1px solid #171717;
  }

  .spread {
    position: absolute;
    top: 4px;
    left: 50%;
    padding: 0 4px;
    border-radius: 3px;
    background: #0b0b0b;
    font-size: 7px;
    line-height: 10px;
    transform: translateX(-50%);
  }

  .types button {
    height: 20px;
    border-bottom: 2px solid #3c3c3c;
    color: #d6d6d6;
  }

  .types .on {
    border-color: #fff;
  }

  .caption,
  h3 {
    display: flex;
    align-items: center;
    gap: 3px;
    height: 14px;
  }

  .caption {
    color: #999;
  }

  .types + .caption {
    margin: 8px 0 2px;
  }

  .field {
    display: flex;
    align-items: center;
    gap: 4px;
    height: 21px;
    padding: 0 3px 0 4px;
    border: 1px solid #484848;
    border-radius: 4px;
    font-weight: 400;
  }

  .filled {
    padding-right: 2px;
    background: #292929;
    color: #999;
  }

  .field input {
    flex: 1;
    width: 0;
    min-width: 0;
    padding: 0;
    border: 0;
    background: none;
    color: inherit;
    font: inherit;
  }

  .field .icon + .amount {
    margin-left: 12px;
  }

  .ticket h3 {
    color: #e2e2e2;
  }

  .brackets {
    justify-content: space-between;
    margin: 13px 0 5px;
  }

  .toggle-row {
    display: flex;
    align-items: center;
    justify-content: space-between;
    height: 14px;
    margin-bottom: 6px;
  }

  .second {
    margin-top: 10px;
  }

  input[type="checkbox"] {
    width: 23px;
    height: 12px;
    margin: 0;
    padding: 2px;
    border-radius: 6px;
    background: #5c5c5c;
    appearance: none;
  }

  input[type="checkbox"]::before {
    display: block;
    width: 8px;
    height: 8px;
    border-radius: 50%;
    background: #292929;
    content: "";
  }

  input[type="checkbox"]:checked::before {
    margin-left: auto;
  }

  .info {
    margin: 14px 0 2px;
  }

  .margin-row {
    display: flex;
    justify-content: space-between;
    color: #5c5c5c;
    font-weight: 400;
  }

  .margin-row i {
    display: inline-block;
    width: 9px;
    border-radius: 50%;
    background: #5c5c5c;
    color: #0f0f0f;
    font-size: 7px;
    font-weight: 700;
    line-height: 9px;
    text-align: center;
  }

  .meter {
    height: 4px;
    margin: 4px 0;
    border-radius: 2px;
    background: #2c2c2c;
  }

  dl div {
    display: flex;
    justify-content: space-between;
    height: 15px;
    color: #e2e2e2;
    line-height: 15px;
  }

  dd {
    font-weight: 700;
  }

  dd small {
    font-weight: 400;
  }

  .submit {
    width: 100%;
    height: 34px;
    margin-top: 14px;
    border-radius: 6px;
    background: #2c2c2c;
    color: #fff;
    font-size: 10px;
    font-weight: 700;
  }

  .rail {
    display: flex;
    flex-direction: column;
    align-items: center;
    gap: 8px;
    padding-top: 5px;
  }

  .rail button {
    position: relative;
    height: 20px;
  }

  .rail .badge {
    top: -1px;
  }

  .push {
    margin-top: auto;
  }

  .rail hr {
    margin: -2px 0;
  }

  .last {
    margin-bottom: 1px;
  }
</style>
